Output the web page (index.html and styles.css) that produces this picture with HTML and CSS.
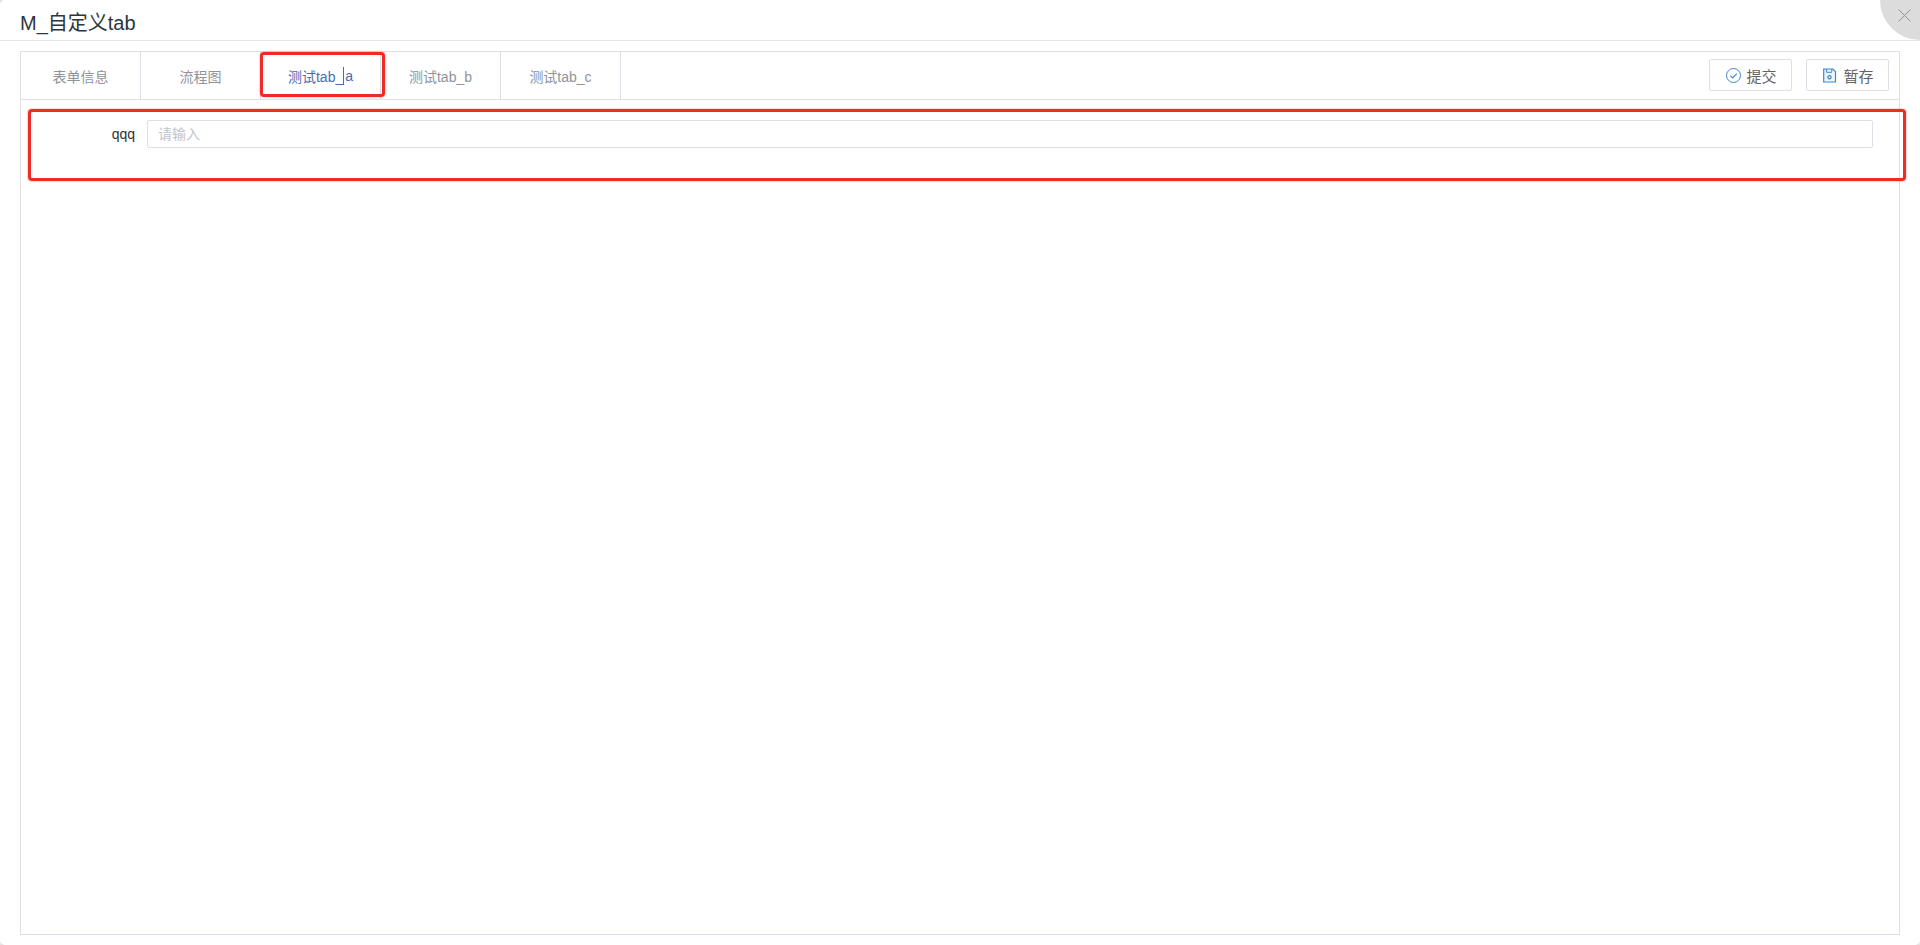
FILE: index.html
```html
<!DOCTYPE html>
<html lang="zh-CN">
<head>
<meta charset="utf-8">
<title>M_自定义tab</title>
<link rel="stylesheet" href="styles.css">
</head>
<body>
<div class="modal">
  <header class="modal-header">
    <h1 class="modal-title">M_自定义tab</h1>
    <button class="modal-close" aria-label="关闭">
      <svg class="close-icon" viewBox="0 0 13 13" width="13" height="13"><path d="M.5.5l12 12M12.5.5l-12 12" stroke="#8f9296" stroke-width="1" fill="none"/></svg>
    </button>
  </header>
  <main class="panel">
    <div class="tabbar">
      <nav class="tabs">
        <a class="tab">表单信息</a>
        <a class="tab">流程图</a>
        <a class="tab tab-active">测试tab_<span class="caret"></span>a<span class="mark mark-tab"></span></a>
        <a class="tab">测试tab_b</a>
        <a class="tab">测试tab_c</a>
      </nav>
      <div class="actions">
        <button class="btn">
          <svg class="btn-icon" viewBox="0 0 15 15" width="15" height="15"><circle cx="7.5" cy="7.5" r="7" fill="none" stroke="#3f86c9" stroke-width="1"/><path d="M4.3 7.6l2.3 2.4 4.2-4.4" fill="none" stroke="#3f86c9" stroke-width="1.1"/></svg>
          提交
        </button>
        <button class="btn">
          <svg class="btn-icon" viewBox="0 0 15 15" width="15" height="15"><path d="M.7 1h9.2l2.6 2.6v10.4H.7z" fill="#eef5fb" stroke="#3f86c9" stroke-width="1.2"/><path d="M3.6 1v3.3h5.2V1" fill="none" stroke="#3f86c9" stroke-width="1"/><circle cx="6.5" cy="9.2" r="1.6" fill="none" stroke="#3f86c9" stroke-width="1.2"/></svg>
          暂存
        </button>
      </div>
    </div>
    <form class="form">
      <div class="form-row">
        <label class="form-label">qqq</label>
        <input class="form-input" type="text" placeholder="请输入">
      </div>
      <span class="mark mark-row"></span>
    </form>
  </main>
</div>
</body>
</html>
```

FILE: styles.css
```css
* { box-sizing: border-box; }
html, body { height: 100%; margin: 0; }
body {
  background: #e4e4e4;
  font-family: "Liberation Sans", "Noto Sans CJK SC", sans-serif;
  overflow: hidden;
}
.modal {
  height: 945px;
  display: flex;
  flex-direction: column;
  padding-bottom: 10px;
  background: #fff;
  border-radius: 5px;
}
.modal-header {
  flex: none;
  height: 41px;
  border-bottom: 1px solid #e6e6e6;
  padding-left: 20px;
  display: flex;
  align-items: center;
  position: relative;
  overflow: hidden;
}
.modal-title { margin: 0; font-size: 20px; font-weight: 400; color: #2d3540; line-height: 24px; padding-top: 5px; }
.modal-close {
  position: absolute;
  top: -40px;
  right: -40px;
  width: 80px;
  height: 80px;
  border: 0;
  border-radius: 50%;
  background: #dcdcdc;
  padding: 0;
}
.close-icon { position: absolute; left: 18px; top: 49px; }
.panel {
  flex: 1;
  margin: 10px 20px 0;
  border: 1px solid #dcdfe6;
  display: flex;
  flex-direction: column;
}
.tabbar {
  flex: none;
  height: 48px;
  border-bottom: 1px solid #dcdfe6;
  display: flex;
  justify-content: space-between;
}
.tabs { display: flex; }
.tab {
  width: 120px;
  border-right: 1px solid #dcdfe6;
  display: flex;
  align-items: center;
  justify-content: center;
  font-size: 14px;
  color: #909399;
  position: relative;
}
.tab-active { color: #3f6fb5; }
.caret { width: 1px; height: 18px; background: #3f6fb5; margin-right: 1px; }
.mark {
  position: absolute;
  border: 3px solid #ee2c25;
  border-radius: 4px;
  box-shadow: 0 0 2px rgba(238, 44, 37, .6);
}
.mark-tab { left: -1px; top: 0; width: 125px; height: 45px; }
.actions { display: flex; gap: 14px; padding: 7px 10px 0 0; }
.btn {
  width: 83px;
  height: 32px;
  border: 1px solid #dcdfe6;
  border-radius: 2px;
  background: #fff;
  color: #606266;
  font-family: inherit;
  font-size: 15px;
  display: flex;
  align-items: center;
  justify-content: center;
  gap: 5px;
  padding: 0 0 0 2px;
}
.form { position: relative; flex: 1; padding: 20px 26px 0 0; }
.form-row { display: flex; align-items: center; }
.form-label { width: 126px; padding-right: 12px; text-align: right; font-size: 14px; color: #303133; }
.form-input {
  flex: 1;
  height: 28px;
  border: 1px solid #dcdfe6;
  border-radius: 2px;
  padding: 0 10px;
  font-family: inherit;
  font-size: 14px;
}
.form-input::placeholder { color: #c0c4cc; }
.mark-row { left: 7px; top: 9px; width: 1878px; height: 72px; }
```
